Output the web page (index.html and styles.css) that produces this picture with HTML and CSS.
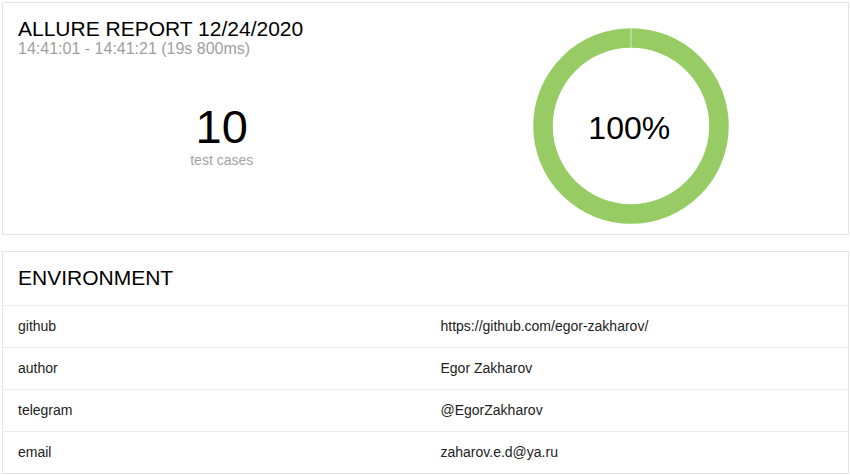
FILE: index.html
```html
<!DOCTYPE html>
<html>
<head>
<meta charset="utf-8">
<link rel="stylesheet" href="styles.css">
</head>
<body>
<div class="page">
  <section class="card summary">
    <div class="summary__left">
      <h2 class="summary__title">ALLURE REPORT 12/24/2020</h2>
      <div class="summary__times">14:41:01 - 14:41:21 (19s 800ms)</div>
      <div class="summary__stats">
        <div class="summary__count">10</div>
        <div class="summary__label">test cases</div>
      </div>
    </div>
    <div class="summary__right">
      <div class="donut">
        <svg class="donut__svg" width="196" height="196" viewBox="0 0 196 196">
          <circle cx="98" cy="98" r="88" fill="none" stroke="#97cc64" stroke-width="19.5"/>
          <line x1="98" y1="0" x2="98" y2="20" stroke="#ffffff" stroke-opacity="0.55" stroke-width="1"/>
        </svg>
        <div class="donut__text">100%</div>
      </div>
    </div>
  </section>

  <section class="card env">
    <h2 class="env__title">ENVIRONMENT</h2>
    <div class="env__row"><div class="env__key">github</div><div class="env__val">https://github.com/egor-zakharov/</div></div>
    <div class="env__row"><div class="env__key">author</div><div class="env__val">Egor Zakharov</div></div>
    <div class="env__row"><div class="env__key">telegram</div><div class="env__val">@EgorZakharov</div></div>
    <div class="env__row"><div class="env__key">email</div><div class="env__val">zaharov.e.d@ya.ru</div></div>
  </section>
</div>
</body>
</html>
```

FILE: styles.css
```css
* { box-sizing: border-box; }
html, body { margin: 0; padding: 0; background: #fff; }
body {
  font-family: "Liberation Sans", Arial, sans-serif;
  font-size: 14px;
  color: #000;
}
.page {
  padding: 2px 1px 0 2px;
  display: flex;
  flex-direction: column;
  gap: 16px;
}
.card {
  border: 1px solid #e4e4e4;
  background: #fff;
}
.summary {
  height: 233px;
  display: grid;
  grid-template-columns: 1fr 1fr;
  padding: 15px 15px 0 15px;
}
.summary__left {
  display: flex;
  flex-direction: column;
}
.summary__title {
  margin: 0;
  font-weight: normal;
  font-size: 21px;
  line-height: 22px;
  color: #000;
}
.summary__times {
  font-size: 16px;
  line-height: 18px;
  color: #a0a0a0;
}
.summary__stats {
  margin-top: 45px;
  display: flex;
  flex-direction: column;
  align-items: center;
}
.summary__count {
  font-size: 47px;
  line-height: 47px;
  color: #000;
}
.summary__label {
  margin-top: 2px;
  font-size: 14px;
  line-height: 16px;
  color: #a0a4a8;
}
.summary__right {
  display: flex;
  justify-content: center;
  padding-top: 10px;
  padding-left: 3px;
}
.donut {
  position: relative;
  width: 196px;
  height: 196px;
}
.donut__svg { display: block; }
.donut__text {
  position: absolute;
  inset: 0;
  display: flex;
  align-items: center;
  justify-content: center;
  font-size: 32px;
  line-height: 1;
  padding-top: 3px;
  padding-right: 3px;
  color: #000;
}
.env__title {
  margin: 0;
  font-weight: normal;
  font-size: 21px;
  line-height: 24px;
  padding: 14px 15px 15px;
  color: #000;
}
.env__row {
  display: grid;
  grid-template-columns: 1fr 1fr;
  height: 42px;
  padding-bottom: 2px;
  border-top: 1px solid #ececec;
  align-items: center;
  color: #222;
}
.env__key, .env__val {
  padding: 0 15px;
  line-height: 16px;
}
```
